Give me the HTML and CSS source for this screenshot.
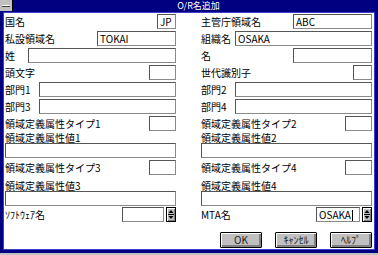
FILE: index.html
```html
<!DOCTYPE html>
<html lang="ja">
<head>
<meta charset="utf-8">
<title>O/R名追加</title>
<link rel="stylesheet" href="styles.css">
</head>
<body>
<div class="window">
  <div class="titlebar">
    <div class="sysmenu"><span class="dash"></span></div>
    <div class="title">O/R名追加</div>
  </div>
  <div class="content">
    <div class="form">
      <div class="row"><span class="lbl">国名</span><span class="box w19">JP</span></div>
      <div class="row"><span class="lbl">主管庁領域名</span><span class="box w79">ABC</span></div>

      <div class="row"><span class="lbl">私設領域名</span><span class="box w79">TOKAI</span></div>
      <div class="row"><span class="lbl">組織名</span><span class="box w137">OSAKA</span></div>

      <div class="row"><span class="lbl">姓</span><span class="box w148"></span></div>
      <div class="row"><span class="lbl">名</span><span class="box w79"></span></div>

      <div class="row"><span class="lbl">頭文字</span><span class="box w27"></span></div>
      <div class="row"><span class="lbl">世代識別子</span><span class="box w19"></span></div>

      <div class="row"><span class="lbl">部門1</span><span class="box w137"></span></div>
      <div class="row"><span class="lbl">部門2</span><span class="box w137"></span></div>

      <div class="row"><span class="lbl">部門3</span><span class="box w137"></span></div>
      <div class="row"><span class="lbl">部門4</span><span class="box w137"></span></div>

      <div class="row"><span class="lbl">領域定義属性タイプ1</span><span class="box w27"></span></div>
      <div class="row"><span class="lbl">領域定義属性タイプ2</span><span class="box w27"></span></div>

      <div class="row label-row"><span class="lbl">領域定義属性値1</span></div>
      <div class="row label-row"><span class="lbl">領域定義属性値2</span></div>

      <div class="row"><span class="box full"></span></div>
      <div class="row"><span class="box full"></span></div>

      <div class="row"><span class="lbl">領域定義属性タイプ3</span><span class="box w27"></span></div>
      <div class="row"><span class="lbl">領域定義属性タイプ4</span><span class="box w27"></span></div>

      <div class="row label-row"><span class="lbl">領域定義属性値3</span></div>
      <div class="row label-row"><span class="lbl">領域定義属性値4</span></div>

      <div class="row"><span class="box full"></span></div>
      <div class="row"><span class="box full"></span></div>

      <div class="row">
        <span class="lbl">ｿﾌﾄｳｪｱ名</span>
        <span class="combo">
          <span class="box w42"></span>
          <span class="spin"><svg width="8" height="11" viewBox="0 0 8 11"><path d="M4 1 L6.5 4 L1.5 4 Z" fill="#000"/><rect x="1" y="5" width="6" height="1" fill="#000"/><path d="M1.5 7 L6.5 7 L4 10 Z" fill="#000"/></svg></span>
        </span>
      </div>
      <div class="row">
        <span class="lbl">MTA名</span>
        <span class="combo">
          <span class="box w44 active">OSAKA<span class="caret"></span></span>
          <span class="spin"><svg width="8" height="11" viewBox="0 0 8 11"><path d="M4 1 L6.5 4 L1.5 4 Z" fill="#000"/><rect x="1" y="5" width="6" height="1" fill="#000"/><path d="M1.5 7 L6.5 7 L4 10 Z" fill="#000"/></svg></span>
        </span>
      </div>
    </div>
    <div class="buttons">
      <button class="btn default">OK</button>
      <button class="btn">ｷｬﾝｾﾙ</button>
      <button class="btn">ﾍﾙﾌﾟ</button>
    </div>
  </div>
</div>
</body>
</html>
```
FILE: styles.css
```css
html, body {
  margin: 0;
  padding: 0;
}
body {
  background: #c0c0c0;
  width: 378px;
  height: 255px;
  overflow: hidden;
  font-family: "Noto Sans CJK JP", "Liberation Sans", sans-serif;
  font-size: 10px;
  line-height: 1;
  color: #000;
}
.window {
  width: 378px;
  height: 253px;
  box-sizing: border-box;
  background: #000080;
  padding: 0 3px 3px 3px;
  display: flex;
  flex-direction: column;
}
.titlebar {
  height: 12px;
  margin: 0 -3px;
  display: flex;
  background: #000080;
}
.sysmenu {
  width: 12px;
  height: 11px;
  background: #c0c0c0;
  display: flex;
  align-items: center;
  justify-content: center;
  border-right: 1px solid #000;
}
.dash {
  width: 8px;
  height: 1px;
  background: #fff;
  border-bottom: 1px solid #404040;
}
.title {
  flex: 1;
  text-align: center;
  color: #fff;
  font-size: 9px;
  line-height: 12px;
  height: 12px;
  padding-left: 6px;
}
.content {
  flex: 1;
  background: #fff;
  border: 1px solid #3c3cc8;
  padding: 1px 2px 0 1px;
  display: flex;
  flex-direction: column;
}
.form {
  display: grid;
  grid-template-columns: 171px 171px;
  column-gap: 25px;
  grid-template-rows: 17px 17px 17px 17px 17px 17px 17px 10px 17px 17px 14px 16px 15px;
  row-gap: 0;
}
.row {
  display: flex;
  justify-content: space-between;
  align-items: flex-start;
  min-width: 0;
}
.row .lbl {
  line-height: 15px;
}
.label-row {
  align-items: flex-end;
}
.label-row .lbl {
  line-height: 10px;
}
.lbl {
  white-space: nowrap;
}
.box {
  box-sizing: border-box;
  height: 15px;
  border: 1px solid #6e6e6e;
  border-color: #555 #8a8a8a #8a8a8a #555;
  background: #fff;
  padding: 0 2px;
  line-height: 13px;
  white-space: nowrap;
  overflow: hidden;
  flex: none;
}
.w19 { width: 19px; }
.w27 { width: 27px; }
.w42 { width: 42px; }
.w44 { width: 44px; }
.w79 { width: 79px; }
.w137 { width: 137px; }
.w148 { width: 148px; }
.full { width: 100%; }
.combo {
  display: flex;
  align-items: center;
  gap: 2px;
}
.spin {
  box-sizing: border-box;
  width: 10px;
  height: 15px;
  background: #c0c0c0;
  border: 1px solid #000;
  box-shadow: inset 1px 1px 0 #fff, inset -1px -1px 0 #808080;
  display: flex;
  align-items: center;
  justify-content: center;
}
.caret {
  display: inline-block;
  width: 1px;
  height: 11px;
  background: #000;
  vertical-align: -2px;
  margin-left: 1px;
}
.buttons {
  margin-top: 10px;
  display: flex;
  justify-content: flex-end;
  gap: 13px;
}
.btn {
  box-sizing: border-box;
  width: 42px;
  height: 16px;
  padding: 0;
  margin: 0;
  font: inherit;
  font-size: 10px;
  line-height: 14px;
  color: #202020;
  background: #c0c0c0;
  border: 1px solid #000;
  border-radius: 1px;
  box-shadow: inset 1px 1px 0 #fff, inset -2px -2px 0 #808080;
}
```
